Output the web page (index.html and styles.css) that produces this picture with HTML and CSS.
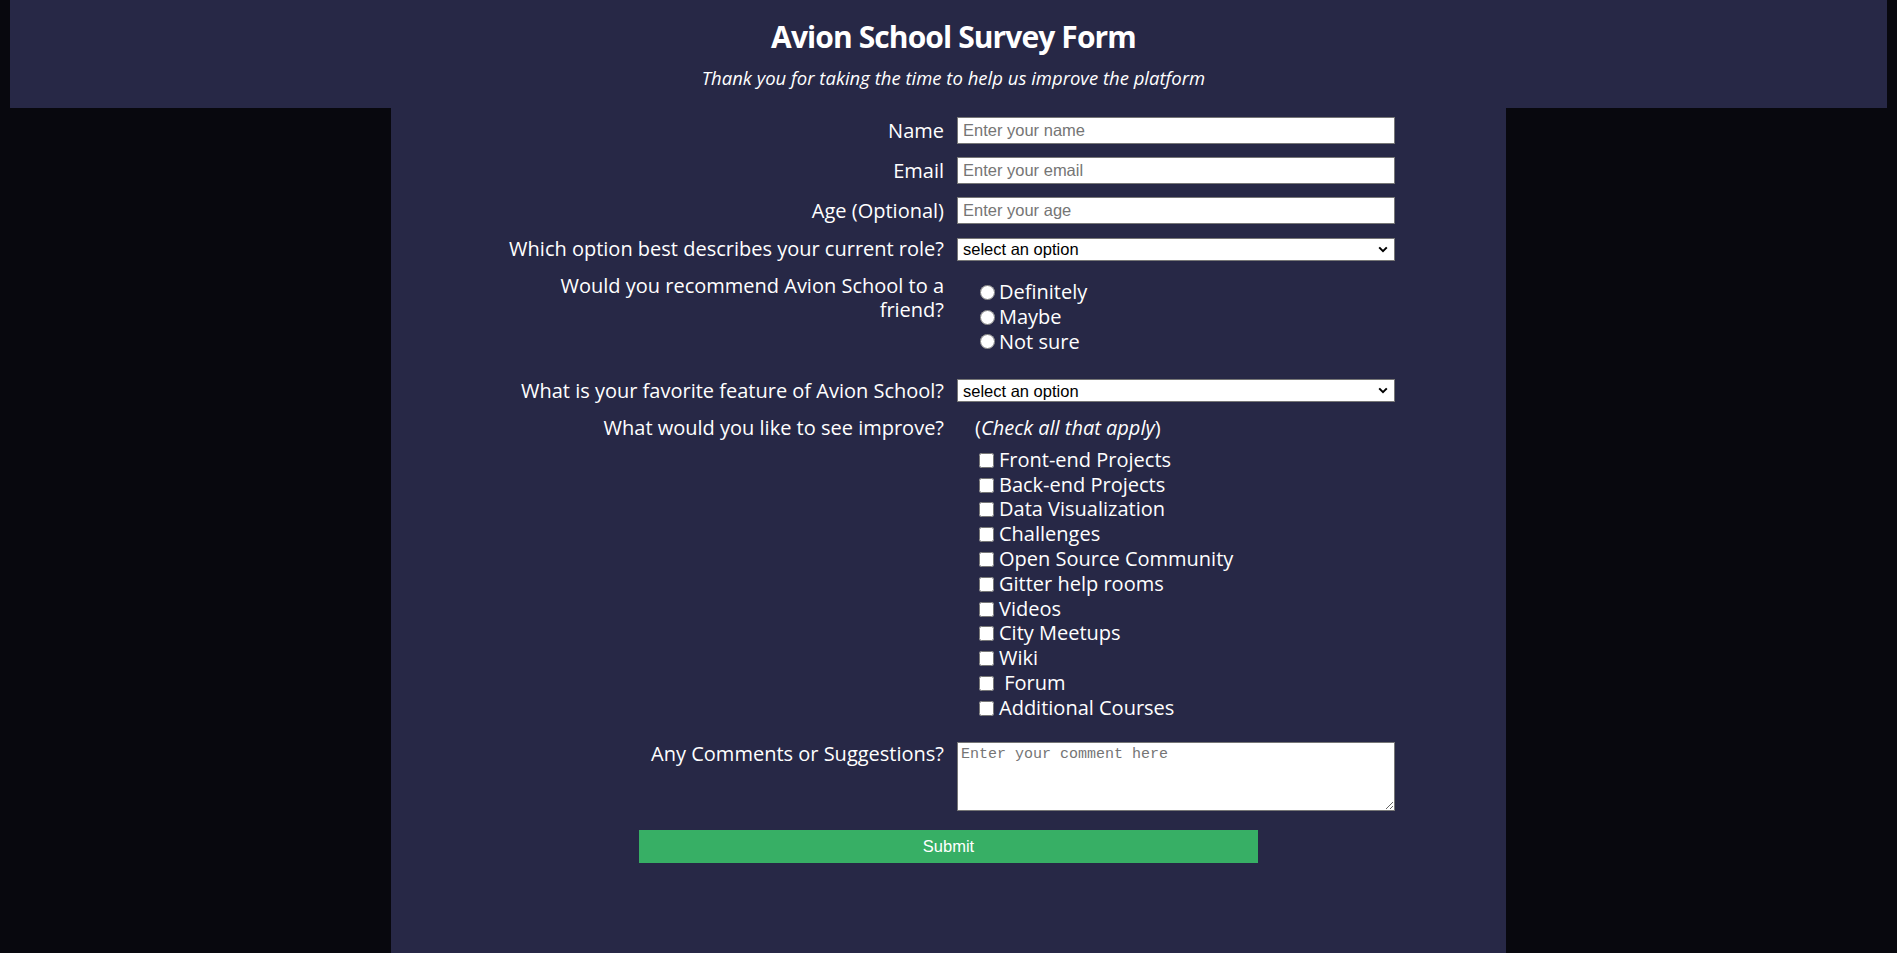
FILE: index.html
```html
<!DOCTYPE html>
<html lang="en">
<head>
<meta charset="utf-8">
<title>Avion School Survey Form</title>
<link rel="stylesheet" href="styles.css">
</head>
<body>
<header class="header">
  <h1 class="title">Avion School Survey Form</h1>
  <p class="subtitle">Thank you for taking the time to help us improve the platform</p>
</header>
<main class="survey">
  <form class="form">
    <div class="row">
      <label class="label" for="name">Name</label>
      <input class="field" id="name" type="text" placeholder="Enter your name">
    </div>
    <div class="row">
      <label class="label" for="email">Email</label>
      <input class="field" id="email" type="email" placeholder="Enter your email">
    </div>
    <div class="row">
      <label class="label" for="age">Age (Optional)</label>
      <input class="field" id="age" type="number" placeholder="Enter your age">
    </div>
    <div class="row">
      <label class="label" for="role">Which option best describes your current role?</label>
      <div class="select-wrap">
        <select class="select" id="role">
          <option>select an option</option>
          <option>Student</option>
          <option>Full Time Job</option>
          <option>Full Time Learner</option>
          <option>Prefer not to say</option>
          <option>Other</option>
        </select>
        <svg class="chev" width="10" height="7" viewBox="0 0 10 7"><path d="M1.2 1.4 L5 5.2 L8.8 1.4" fill="none" stroke="#000" stroke-width="2"/></svg>
      </div>
    </div>
    <div class="row row-top row-radio">
      <div class="label">Would you recommend Avion School to a friend?</div>
      <div class="group radios">
        <label class="opt"><input class="radio" type="radio" name="rec">Definitely</label>
        <label class="opt"><input class="radio" type="radio" name="rec">Maybe</label>
        <label class="opt"><input class="radio" type="radio" name="rec">Not sure</label>
      </div>
    </div>
    <div class="row">
      <label class="label" for="fav">What is your favorite feature of Avion School?</label>
      <div class="select-wrap">
        <select class="select" id="fav">
          <option>select an option</option>
          <option>Challenges</option>
          <option>Projects</option>
          <option>Community</option>
          <option>Open Source</option>
        </select>
        <svg class="chev" width="10" height="7" viewBox="0 0 10 7"><path d="M1.2 1.4 L5 5.2 L8.8 1.4" fill="none" stroke="#000" stroke-width="2"/></svg>
      </div>
    </div>
    <div class="row row-top row-check">
      <div class="label">What would you like to see improve?</div>
      <div class="group checks">
        <div class="hint">(<em>Check all that apply</em>)</div>
        <label class="opt"><input class="box" type="checkbox">Front-end Projects</label>
        <label class="opt"><input class="box" type="checkbox">Back-end Projects</label>
        <label class="opt"><input class="box" type="checkbox">Data Visualization</label>
        <label class="opt"><input class="box" type="checkbox">Challenges</label>
        <label class="opt"><input class="box" type="checkbox">Open Source Community</label>
        <label class="opt"><input class="box" type="checkbox">Gitter help rooms</label>
        <label class="opt"><input class="box" type="checkbox">Videos</label>
        <label class="opt"><input class="box" type="checkbox">City Meetups</label>
        <label class="opt"><input class="box" type="checkbox">Wiki</label>
        <label class="opt"><input class="box" type="checkbox"> Forum</label>
        <label class="opt"><input class="box" type="checkbox">Additional Courses</label>
      </div>
    </div>
    <div class="row row-top">
      <label class="label" for="comments">Any Comments or Suggestions?</label>
      <textarea class="area" id="comments" placeholder="Enter your comment here"></textarea>
    </div>
    <div class="actions">
      <button class="submit" type="submit">Submit</button>
    </div>
  </form>
</main>
</body>
</html>
```
FILE: styles.css
```css
* {
  box-sizing: border-box;
}

html {
  background: #08080e;
}

body {
  margin: 0 10px;
  background: #08080e;
  color: #ffffff;
  font-family: "Open Sans", "DejaVu Sans", sans-serif;
}

.header {
  height: 108px;
  margin-right: -10px;
  background: #272846;
  text-align: center;
  padding-top: 19px;
}

.title {
  margin: 0;
  font-size: 30px;
  line-height: 36px;
  font-weight: 700;
  letter-spacing: -0.9px;
}

.subtitle {
  margin: 11px 0 0;
  font-size: 18.5px;
  line-height: 24px;
  font-style: italic;
}

.survey {
  width: 1115px;
  min-height: 845px;
  margin: 0 auto;
  background: #272846;
  padding-top: 9px;
}

.row {
  display: flex;
  align-items: center;
  gap: 13px;
  margin-bottom: 13px;
}

.row-top {
  align-items: flex-start;
}

.label {
  width: 553px;
  flex: none;
  text-align: right;
  font-size: 20px;
  line-height: 24px;
  padding-left: 114px;
}

.field {
  width: 438px;
  height: 27px;
  margin: 0;
  border: 1px solid #767676;
  padding: 0 5px;
  font-family: "Liberation Sans", Arial, sans-serif;
  font-size: 16.5px;
  background: #fff;
  color: #000;
}

.field::placeholder {
  color: #757575;
}

.select-wrap {
  position: relative;
  width: 438px;
  height: 23px;
}

.select {
  appearance: none;
  -webkit-appearance: none;
  width: 100%;
  height: 23px;
  margin: 0;
  border: 1px solid #767676;
  border-radius: 0;
  padding: 0 5px;
  background: #fff;
  color: #000;
  font-family: "Liberation Sans", Arial, sans-serif;
  font-size: 16.5px;
}

.chev {
  position: absolute;
  right: 7px;
  top: 8px;
  pointer-events: none;
}

.group {
  display: flex;
  flex-direction: column;
}

.radios {
  padding-top: 6px;
  padding-left: 23px;
}

.row-radio {
  margin-bottom: 24.5px;
}

.checks {
  padding-left: 18px;
}

.hint {
  font-size: 20px;
  line-height: 24px;
  margin-bottom: 8px;
}

.row-check {
  margin-bottom: 21.5px;
}

.opt {
  display: flex;
  align-items: center;
  font-size: 20px;
  line-height: 24.8px;
  height: 24.8px;
  white-space: pre;
}

.radio {
  width: 15px;
  height: 15px;
  margin: 0 4px 0 0;
}

.box {
  width: 15px;
  height: 15px;
  margin: 0 5px 0 4px;
}

.area {
  width: 438px;
  height: 69px;
  margin: 0;
  border: 1px solid #767676;
  padding: 3px 3px;
  font-family: "Liberation Mono", monospace;
  font-size: 15px;
  resize: both;
  background: #fff;
}

.area::placeholder {
  color: #757575;
}

.actions {
  display: flex;
  justify-content: center;
  padding-top: 6px;
}

.submit {
  width: 619px;
  height: 33px;
  border: none;
  background: #37af65;
  color: #fff;
  font-family: "Liberation Sans", Arial, sans-serif;
  font-size: 16.5px;
}
```
